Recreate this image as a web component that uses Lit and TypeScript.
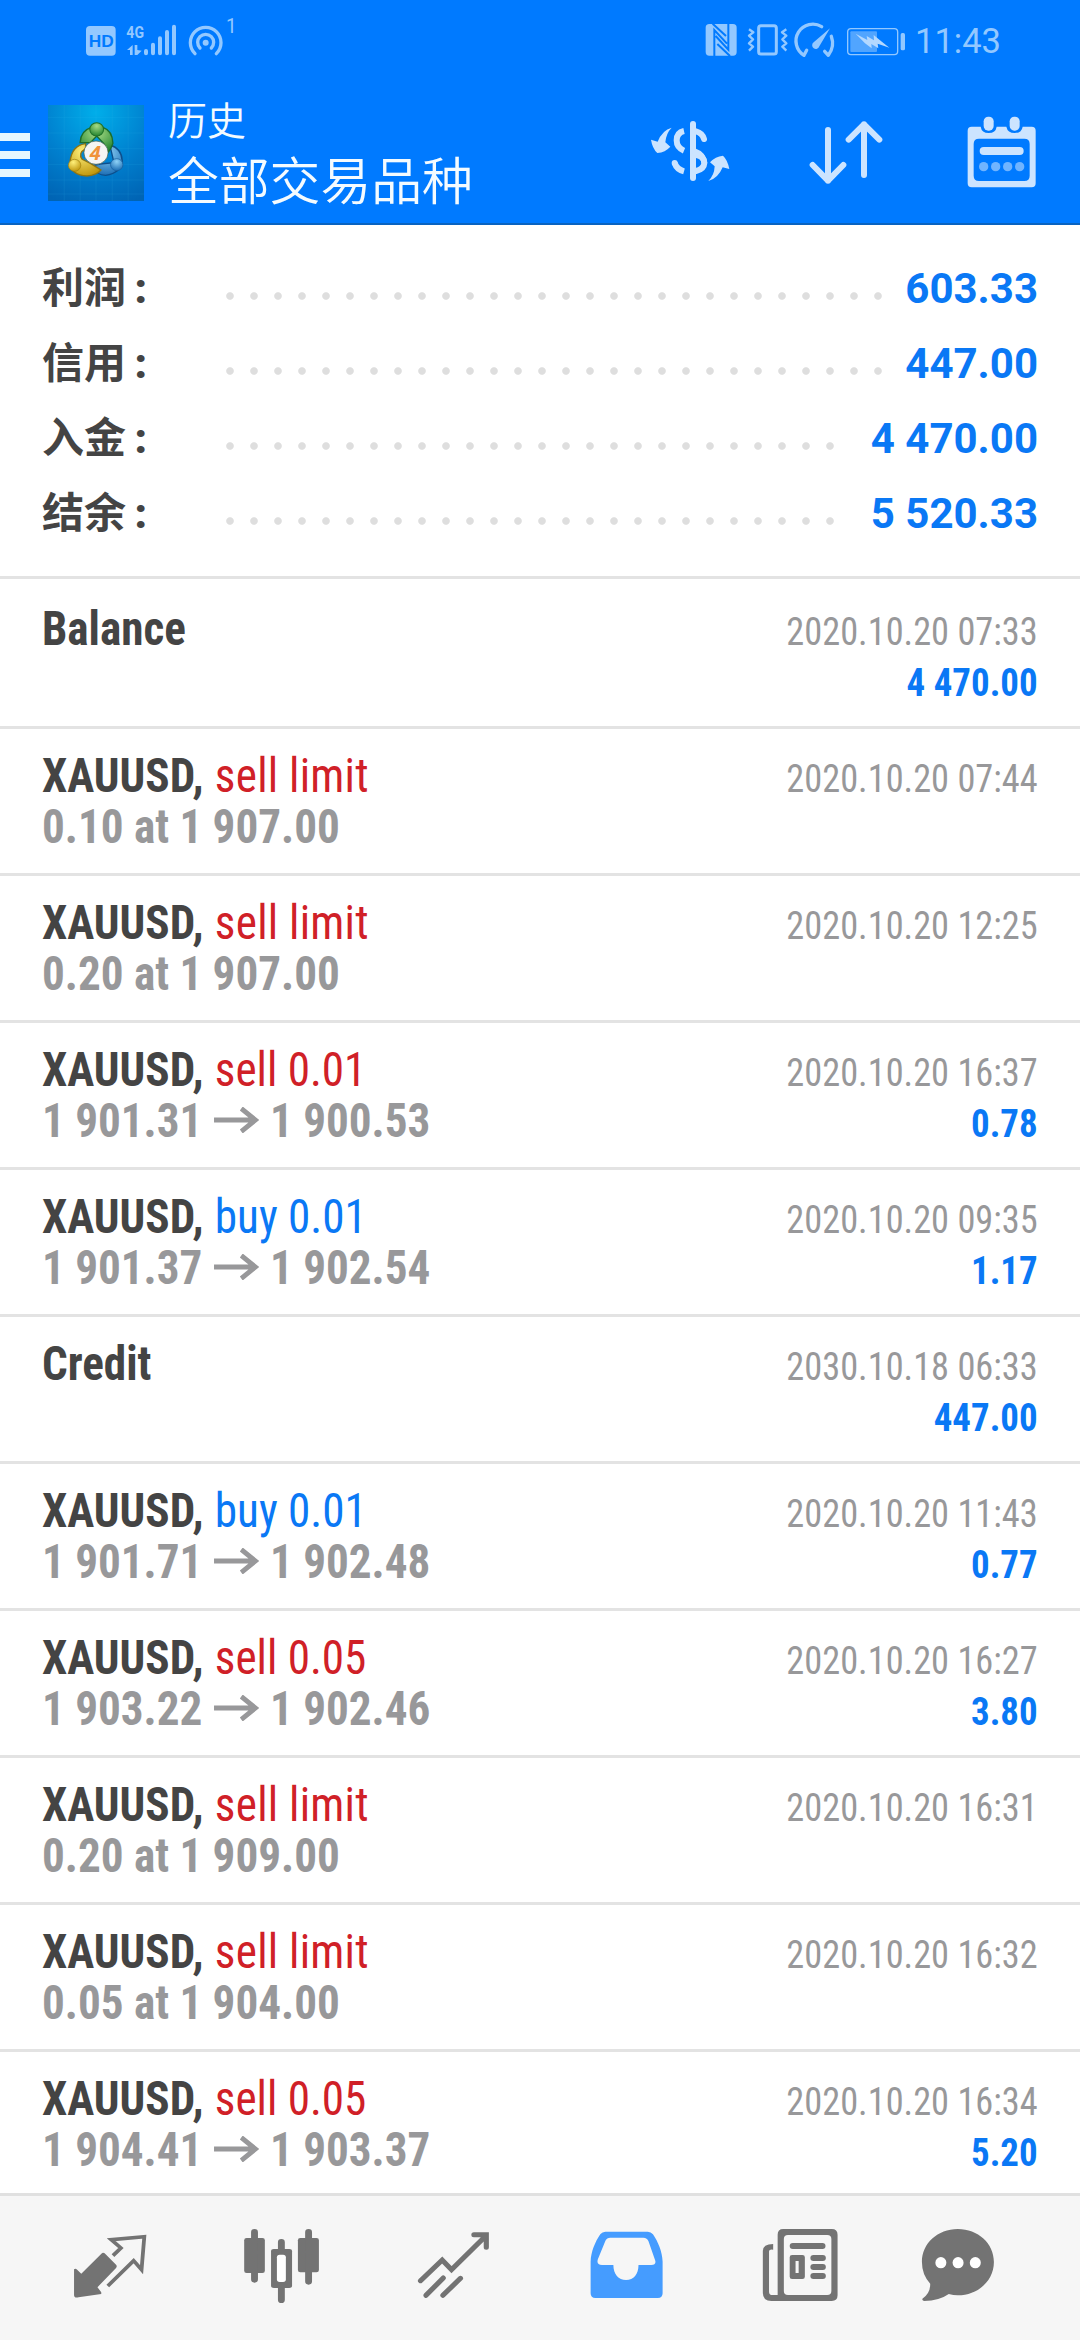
import { LitElement, html, svg, css, nothing } from "lit";
import { customElement, property } from "lit/decorators.js";

interface Deal {
  name: string;
  kind?: "sell" | "buy";
  action?: string;
  detail?: string;
  from?: string;
  to?: string;
  date: string;
  amount?: string;
}

const SUMMARY = [
  { label: "利润", value: "603.33" },
  { label: "信用", value: "447.00" },
  { label: "入金", value: "4 470.00" },
  { label: "结余", value: "5 520.33" },
];

const DEALS: Deal[] = [
  { name: "Balance", date: "2020.10.20 07:33", amount: "4 470.00" },
  { name: "XAUUSD,", kind: "sell", action: "sell limit", detail: "0.10 at 1 907.00", date: "2020.10.20 07:44" },
  { name: "XAUUSD,", kind: "sell", action: "sell limit", detail: "0.20 at 1 907.00", date: "2020.10.20 12:25" },
  { name: "XAUUSD,", kind: "sell", action: "sell 0.01", from: "1 901.31", to: "1 900.53", date: "2020.10.20 16:37", amount: "0.78" },
  { name: "XAUUSD,", kind: "buy", action: "buy 0.01", from: "1 901.37", to: "1 902.54", date: "2020.10.20 09:35", amount: "1.17" },
  { name: "Credit", date: "2030.10.18 06:33", amount: "447.00" },
  { name: "XAUUSD,", kind: "buy", action: "buy 0.01", from: "1 901.71", to: "1 902.48", date: "2020.10.20 11:43", amount: "0.77" },
  { name: "XAUUSD,", kind: "sell", action: "sell 0.05", from: "1 903.22", to: "1 902.46", date: "2020.10.20 16:27", amount: "3.80" },
  { name: "XAUUSD,", kind: "sell", action: "sell limit", detail: "0.20 at 1 909.00", date: "2020.10.20 16:31" },
  { name: "XAUUSD,", kind: "sell", action: "sell limit", detail: "0.05 at 1 904.00", date: "2020.10.20 16:32" },
  { name: "XAUUSD,", kind: "sell", action: "sell 0.05", from: "1 904.41", to: "1 903.37", date: "2020.10.20 16:34", amount: "5.20" },
];

@customElement("status-bar")
class StatusBar extends LitElement {
  static styles = css`
    :host { display: flex; height: 90px; align-items: stretch; padding-left: 60px; color: #93c8ff; }
    .left { width: 300px; height: 90px; }
    .right { width: 210px; height: 90px; margin-left: 340px; }
    .time { font: 400 34.5px/82px Roboto, sans-serif; padding-left: 5px; }
    .hd { font: 700 51px "Liberation Sans", sans-serif; fill: #007aff; }
    .net { font: 700 48px Roboto, sans-serif; }
    .one { font: 400 58px Roboto, sans-serif; }
  `;
  render() {
    return html`
      <svg class="left" viewBox="0 0 900 270" fill="currentColor">
        <rect x="78" y="78" width="89" height="89" rx="12" />
        <text class="hd" x="86" y="142" textLength="75" lengthAdjust="spacingAndGlyphs">HD</text>
        <text class="net" x="199" y="113" textLength="53" lengthAdjust="spacingAndGlyphs">4G</text>
        <path d="M201 150 218 135V165H210V150ZM224 135H232V150L245 152 232 165H224Z" />
        <g stroke="currentColor" stroke-width="12" stroke-linecap="round">
          <path d="M258 153V160M279 134V160M300 115V160M321 96V160M342 80V160" />
        </g>
        <g fill="none" stroke="currentColor" stroke-width="10" stroke-linecap="round">
          <path d="M405 161A46 46 0 1 1 469 161" />
          <path d="M420 144A24 24 0 1 1 454 144" />
        </g>
        <circle cx="437" cy="128" r="9" />
        <text class="one" x="498" y="99" textLength="32" lengthAdjust="spacingAndGlyphs">1</text>
      </svg>
      <svg class="right" viewBox="60 0 630 270" fill="currentColor">
        <rect x="77" y="72" width="93" height="95" rx="11" />
        <path d="M98 71 138 108M103 168V90L141 131M145 71V149L107 108M150 168 112 132" fill="none" stroke="#007aff" stroke-width="6" />
        <g fill="none" stroke="currentColor" stroke-width="9" stroke-linejoin="round">
          <rect x="236" y="77" width="53" height="85" rx="7" />
          <path d="M207 88 220 97 207 107 219 118 207 130 219 140 207 152M319 88 306 97 319 107 307 118 319 130 307 140 319 152" stroke-width="7" />
        </g>
        <g fill="none" stroke="currentColor" stroke-width="10" stroke-linecap="round">
          <path d="M425 80A49 49 0 0 0 372 166L380 151M454 109Q465 139 445 166L434 154" stroke-linejoin="round" />
        </g>
        <path d="M450 85 418 139A11 11 0 1 1 401 127Z" />
        <rect x="503" y="86" width="150" height="78" rx="10" fill="none" stroke="currentColor" stroke-width="4" />
        <rect x="511" y="94" width="80" height="62" rx="3" opacity=".55" />
        <path d="M527 101 562 120 560 108 582 121 581 105 600 121 628 143 593 131 595 145 574 132 575 145 555 130Z" fill="#b3d8ff" />
        <rect x="662" y="99" width="13" height="52" rx="5" />
      </svg>
      <span class="time">11:43</span>
    `;
  }
}

@customElement("app-header")
class AppHeader extends LitElement {
  static styles = css`
    :host { display: flex; height: 135px; box-sizing: border-box; align-items: flex-start; border-bottom: 2px solid #0a63c0; color: #cce4ff; }
    .menu { width: 30px; padding-top: 43px; display: grid; gap: 10px; }
    .menu i { display: block; height: 8px; background: #e6f7ff; }
    .logo { width: 96px; height: 96px; margin: 15px 0 0 18px; }
    .four { font: italic 700 58px "Open Sans", Roboto, sans-serif; fill: #f0923a; }
    .titles { flex: 1; padding: 5px 0 0 24px; color: #f4fbff; font-family: "Noto Sans CJK SC", sans-serif; font-weight: 350; }
    .title { font-size: 39px; line-height: 46px; }
    .sub { font-size: 50.8px; line-height: 74px; }
    .act { width: 100px; height: 135px; margin-left: 60px; }
    .cal { margin: 0 27px 0 53.3px; }
  `;
  render() {
    return html`
      <div class="menu"><i></i><i></i><i></i></div>
      <svg class="logo" viewBox="139 45 278 288" preserveAspectRatio="none">
        <defs>
          <radialGradient id="bg" cx=".5" cy=".08" r="1"><stop offset="0" stop-color="#00aeea" /><stop offset=".55" stop-color="#0080cf" /><stop offset="1" stop-color="#0064b4" /></radialGradient>
          <radialGradient id="gr" cx=".5" cy=".25" r=".7"><stop offset="0" stop-color="#a6dc86" /><stop offset="1" stop-color="#2c8a35" /></radialGradient>
          <radialGradient id="ye" cx=".4" cy=".25" r=".8"><stop offset="0" stop-color="#fff07a" /><stop offset="1" stop-color="#bd9309" /></radialGradient>
          <radialGradient id="bl" cx=".5" cy=".25" r=".8"><stop offset="0" stop-color="#8ed2f7" /><stop offset="1" stop-color="#1668b0" /></radialGradient>
        </defs>
        <rect x="139" y="45" width="278" height="288" fill="url(#bg)" />
        <path d="M186 45V333M232 45V333M278 45V333M325 45V333M371 45V333M139 82H417M139 129H417M139 176H417M139 223H417M139 270H417M139 312H417" stroke="#3bbcf0" stroke-opacity=".18" stroke-width="2" />
        <g stroke-width="4">
          <path d="M318 165Q352 175 354 212Q352 248 306 256Q280 256 262 228L290 222 330 218Z" fill="url(#bl)" stroke="#0d4f8c" />
          <path d="M248 161Q208 166 203 215Q205 256 252 258Q280 256 292 240L262 220 238 208Q225 190 248 176Z" fill="url(#ye)" stroke="#8f7411" />
          <path d="M232 158Q233 122 265 112H298Q326 122 327 160Q322 176 314 186L300 160 280 138 262 158Z" fill="url(#gr)" stroke="#1c6d2b" />
          <circle cx="280" cy="118" r="20" fill="url(#gr)" stroke="#1f7028" stroke-width="3" />
          <circle cx="216" cy="226" r="18" fill="url(#ye)" stroke="#a0810f" stroke-width="2" />
          <circle cx="338" cy="224" r="18" fill="url(#bl)" stroke="#185f9f" stroke-width="2" />
        </g>
        <circle cx="278" cy="188" r="35" fill="#f5f5f3" stroke="#3b5a4c" stroke-width="2" />
        <text class="four" x="260" y="209">4</text>
      </svg>
      <div class="titles"><div class="title">历史</div><div class="sub">全部交易品种</div></div>
      <svg class="act" viewBox="60 0 300 405" fill="none" stroke="currentColor" stroke-width="18">
        <path d="M219 102V264" stroke-linecap="round" />
        <path d="M192 123Q170 128 170 151Q170 173 192 182M164 219Q170 238 192 244" />
        <path d="M164 219V219M228 124Q247 129 252 147M228 190Q253 199 253 219Q252 237 228 243" stroke-linecap="round" />
        <g fill="currentColor" stroke="none"><path d="M155 113Q138 130 136 157L151 170Q136 187 112 189Q97 175 93 149L113 155Q127 120 155 113ZM265 273Q283 256 284 229L270 217Q286 199 309 197Q323 210 328 237L308 232Q294 266 265 273Z" /><path d="M228 176Q258 186 262 219L244 219Q244 207 228 204Z" /></g>
      </svg>
      <svg class="act" viewBox="540 0 300 405" fill="none" stroke="currentColor" stroke-width="18" stroke-linecap="round" stroke-linejoin="round">
        <path d="M624 120V272M578 225 624 272 670 225M732 255V103M686 149 732 103 778 149" />
      </svg>
      <svg class="act cal" viewBox="1000 0 300 405" fill="currentColor">
        <path fill-rule="evenodd" d="M1056 110H1083Q1086 129 1107 129T1131 110H1160Q1164 129 1185 129T1209 110H1236Q1248 110 1248 122V280Q1248 292 1236 292H1056Q1044 292 1044 280V122Q1044 110 1056 110ZM1078 146Q1062 146 1062 162V257Q1062 273 1078 273H1214Q1230 273 1230 257V162Q1230 146 1214 146Z" />
        <rect x="1092" y="80" width="30" height="42" rx="14" /><rect x="1170" y="80" width="30" height="42" rx="14" />
        <rect x="1080" y="171" width="132" height="24" rx="12" />
        <g opacity=".55"><circle cx="1092" cy="230" r="14" /><circle cx="1128" cy="230" r="14" /><circle cx="1164" cy="230" r="14" /><circle cx="1200" cy="230" r="14" /></g>
      </svg>
    `;
  }
}

@customElement("account-summary")
class AccountSummary extends LitElement {
  static styles = css`
    :host { display: block; padding: 26px 42px 25px; border-bottom: 3px solid #e3e3e3; }
    .row { display: flex; height: 75px; line-height: 67px; font-size: 42px; align-items: baseline; }
    .label { width: 176px; font-family: "Noto Sans CJK SC", sans-serif; font-weight: 700; color: #444; white-space: pre; }
    .colon { font-family: Roboto, sans-serif; font-weight: 900; margin-left: -2px; }
    .dots { flex: 1; align-self: stretch; margin-right: 22px; background: radial-gradient(circle at 12px 45px, #dedede 3.3px, transparent 4.3px) 0 0 / 24px 75px repeat-x; }
    .value { font-family: Roboto, sans-serif; font-weight: 700; color: #0a78f5; }
  `;
  render() {
    return SUMMARY.map(
      (s) => html`<div class="row"><span class="label">${s.label}<span class="colon"> :</span></span><span class="dots"></span><span class="value">${s.value}</span></div>`,
    );
  }
}

@customElement("deal-row")
class DealRow extends LitElement {
  @property({ attribute: false }) deal!: Deal;
  static styles = css`
    :host { display: flex; justify-content: space-between; box-sizing: border-box; height: 147px; flex: none; padding: 21px 42px 0; border-bottom: 3px solid #e3e3e3; font-family: "Roboto Condensed", Roboto, sans-serif; font-stretch: 75%; line-height: 51px; }
    :host(.first) { height: 150px; padding-top: 24px; }
    .main { font-size: 48px; font-weight: 700; color: #444; transform: scaleX(0.94); transform-origin: 0 0; }
    .main div { height: 51px; white-space: nowrap; }
    .side { font-size: 39px; color: #98989a; text-align: right; padding-top: 4px; }
    .side div { transform-origin: 100% 0; }
    .date { transform: scaleX(0.932); }
    .act { font-weight: 400; margin-left: 1px; }
    .limit { letter-spacing: 0.3px; }
    .sell { color: #d02027; }
    .buy { color: #0a78f5; }
    .main .detail { color: #98989a; }
    .amount { font-weight: 700; color: #0a78f5; transform: scaleX(0.946); }
    .arrow { width: 48px; height: 26px; margin: 0 12px; vertical-align: 4px; }
  `;
  render() {
    const d = this.deal;
    return html`
      <div class="main">
        <div>${d.name}${d.action ? html` <span class="act ${d.kind!} ${d.detail ? "limit" : ""}">${d.action}</span>` : nothing}</div>
        ${d.detail ? html`<div class="detail">${d.detail}</div>` : nothing}
        ${d.from
          ? html`<div class="detail">${d.from}<svg class="arrow" viewBox="0 0 48 26" fill="none" stroke="currentColor" stroke-width="5"><path d="M0 13H44M29 1.5 44 13 29 24.5" /></svg>${d.to}</div>`
          : nothing}
      </div>
      <div class="side"><div class="date">${d.date}</div>${d.amount ? html`<div class="amount">${d.amount}</div>` : nothing}</div>
    `;
  }
}

const TABS = [
  { x: 69.7, art: svg`<path d="M299 218Q303 218 306 222L337 254Q341 259 337 264L283 322 294 337V342L228 352Q215 355 215 345V268Q219 264 224 269L236 281 293 223Q296 219 299 218Z" /><path d="M328 227 351 204 323 179 419 170 411 269 388 242 313 318" fill="none" stroke="currentColor" stroke-width="11" />` },
  { x: 569.1, art: svg`<rect x="709" y="174" width="60" height="105" rx="7" /><rect x="865" y="174" width="61" height="103" rx="7" /><path d="M739 157V298M896 157V304M817 187V210M817 322V359" stroke="currentColor" stroke-width="20" stroke-linecap="round" /><path fill-rule="evenodd" d="M795 207H840Q848 207 848 214V317Q848 324 840 324H795Q787 324 787 317V214Q787 207 795 207Z" /><rect x="804" y="224" width="26" height="82" rx="8" fill="#fff" />` },
  { x: 1068.5, art: svg`<path d="M1221 302 1284 240 1311 269 1408 170M1376 164H1412V202M1237 346 1287 294M1286 346 1337 295" fill="none" stroke="currentColor" stroke-width="15" stroke-linecap="round" /><path d="M1395 160H1416V185Z" />` },
  { x: 0, art: svg`<path class="on" fill-rule="evenodd" d="M190 155H313Q322 155 328 163C343 186 355 215 356 245V340Q356 354 342 354H161Q147 354 147 340V245C148 215 160 186 175 163Q181 155 190 155ZM204 173Q194 173 190 182L168 238Q163 255 180 255H213C213 283 228 300 250 300S286 283 286 255H323Q339 255 334 240L315 184Q311 173 300 173Z" />` },
  { x: 499.4, art: svg`<path fill-rule="evenodd" d="M706 147H847Q864 147 864 164V346Q864 363 847 363H672Q647 363 647 338V213Q647 192 677 192V209Q665 207 665 214V335Q665 345 675 345H690V164Q690 147 706 147ZM720 165Q708 165 708 177V333Q708 345 720 345H834Q846 345 846 333V177Q846 165 834 165Z" /><path d="M734 198H820M794 234H821M794 261H821M794 288H821" stroke="currentColor" stroke-width="18" stroke-linecap="round" /><path fill-rule="evenodd" d="M732 225H762Q769 225 769 232V290Q769 297 762 297H732Q725 297 725 290V232Q725 225 732 225ZM742 243V279H751V243Z" />` },
  { x: 998.9, art: svg`<path d="M1213 147C1272 147 1318 190 1318 246S1272 346 1213 346Q1200 346 1187 342Q1160 362 1115 363 1107 360 1112 355 1134 338 1133 311 1109 284 1109 246C1109 190 1155 147 1213 147Z" /><g fill="#fff"><ellipse cx="1164" cy="248" rx="16" ry="17" /><ellipse cx="1214" cy="248" rx="16" ry="17" /><ellipse cx="1264" cy="248" rx="16" ry="17" /></g>` },
];

@customElement("tab-bar")
class TabBar extends LitElement {
  static styles = css`
    :host { display: grid; grid-template-columns: repeat(6, 172px); justify-content: center; height: 144px; border-top: 3px solid #e0e0e0; background: #f6f6f6; color: #737373; }
    svg { width: 172px; height: 144px; }
    .on { fill: #459cff; }
  `;
  render() {
    return TABS.map(
      (t) => html`<svg viewBox="${t.x} 48 499.4 432" preserveAspectRatio="none" fill="currentColor">${t.art}</svg>`,
    );
  }
}

@customElement("app-root")
class AppRoot extends LitElement {
  static styles = css`
    :host { display: flex; flex-direction: column; height: 2340px; overflow: hidden; background: #fff; }
    .top { background: #007aff; flex: none; }
    .list { flex: 1; min-height: 0; overflow: hidden; display: flex; flex-direction: column; }
  `;
  render() {
    return html`
      <div class="top"><status-bar></status-bar><app-header></app-header></div>
      <account-summary></account-summary>
      <div class="list">${DEALS.map((d, i) => html`<deal-row class=${i === 0 ? "first" : ""} .deal=${d}></deal-row>`)}</div>
      <tab-bar></tab-bar>
    `;
  }
}
